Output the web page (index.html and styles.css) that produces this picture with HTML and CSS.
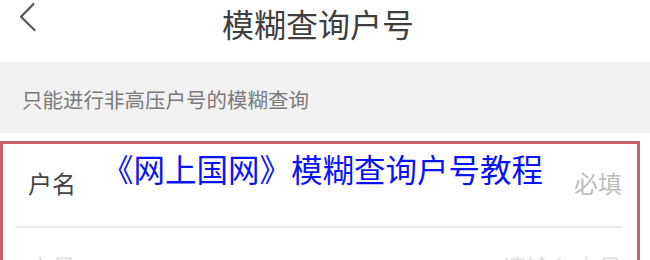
FILE: index.html
```html
<!DOCTYPE html>
<html lang="zh-CN">
<head>
<meta charset="utf-8">
<title>模糊查询户号</title>
<link rel="stylesheet" href="styles.css">
</head>
<body>
<div class="page">
  <header class="header">
    <div class="back">
      <svg width="53" height="38" viewBox="0 0 53 38">
        <polyline points="33.5,4 21,16.8 34.5,30" fill="none" stroke="#555" stroke-width="2.2" stroke-linecap="round" stroke-linejoin="round"/>
      </svg>
    </div>
    <h1 class="title">模糊查询户号</h1>
    <div></div>
  </header>
  <div class="notice">只能进行非高压户号的模糊查询</div>
  <div class="card">
    <div class="row">
      <span class="label">户名</span>
      <span class="hint">必填</span>
    </div>
    <div class="divider"></div>
    <div class="row">
      <span class="label faint">户号</span>
      <span class="hint">请输入户号</span>
    </div>
    <div class="caption">《网上国网》模糊查询户号教程</div>
  </div>
</div>
</body>
</html>
```

FILE: styles.css
```css
html, body {
  margin: 0;
  padding: 0;
  background: #ffffff;
}
body {
  font-family: "Noto Sans CJK SC", "Noto Sans", sans-serif;
  overflow: hidden;
}
.page {
  width: 650px;
  height: 260px;
  overflow: hidden;
}
.header {
  height: 62px;
  display: grid;
  grid-template-columns: 53px 1fr 67px;
  align-items: start;
}
.back {
  height: 38px;
}
.back svg {
  display: block;
}
.title {
  margin: 0;
  font-size: 32px;
  line-height: 46px;
  font-weight: 400;
  color: #3e3e3e;
  text-align: center;
}
.notice {
  height: 71px;
  box-sizing: border-box;
  padding: 3px 0 0 22px;
  display: flex;
  align-items: center;
  background: #f2f2f2;
  font-size: 20.5px;
  color: #7a7a7a;
}
.card {
  position: relative;
  margin-top: 8px;
  width: 640px;
  box-sizing: border-box;
  border: 3px solid #c75f6c;
  border-bottom: none;
  height: 130px;
}
.row {
  height: 82px;
  box-sizing: border-box;
  padding: 0 15px 6px 25px;
  display: flex;
  align-items: center;
  justify-content: space-between;
  font-size: 24px;
}
.label {
  color: #444444;
}
.label.faint {
  color: #dddddd;
}
.hint {
  color: #bdbdbd;
}
.row + .divider + .row .hint {
  color: #e0e0e0;
}
.divider {
  height: 2px;
  margin: 0 15px 0 12px;
  background: #ececec;
}
.caption {
  position: absolute;
  left: 99px;
  top: 4px;
  font-size: 31.5px;
  line-height: 40px;
  color: #0a14f5;
  white-space: nowrap;
}
```
